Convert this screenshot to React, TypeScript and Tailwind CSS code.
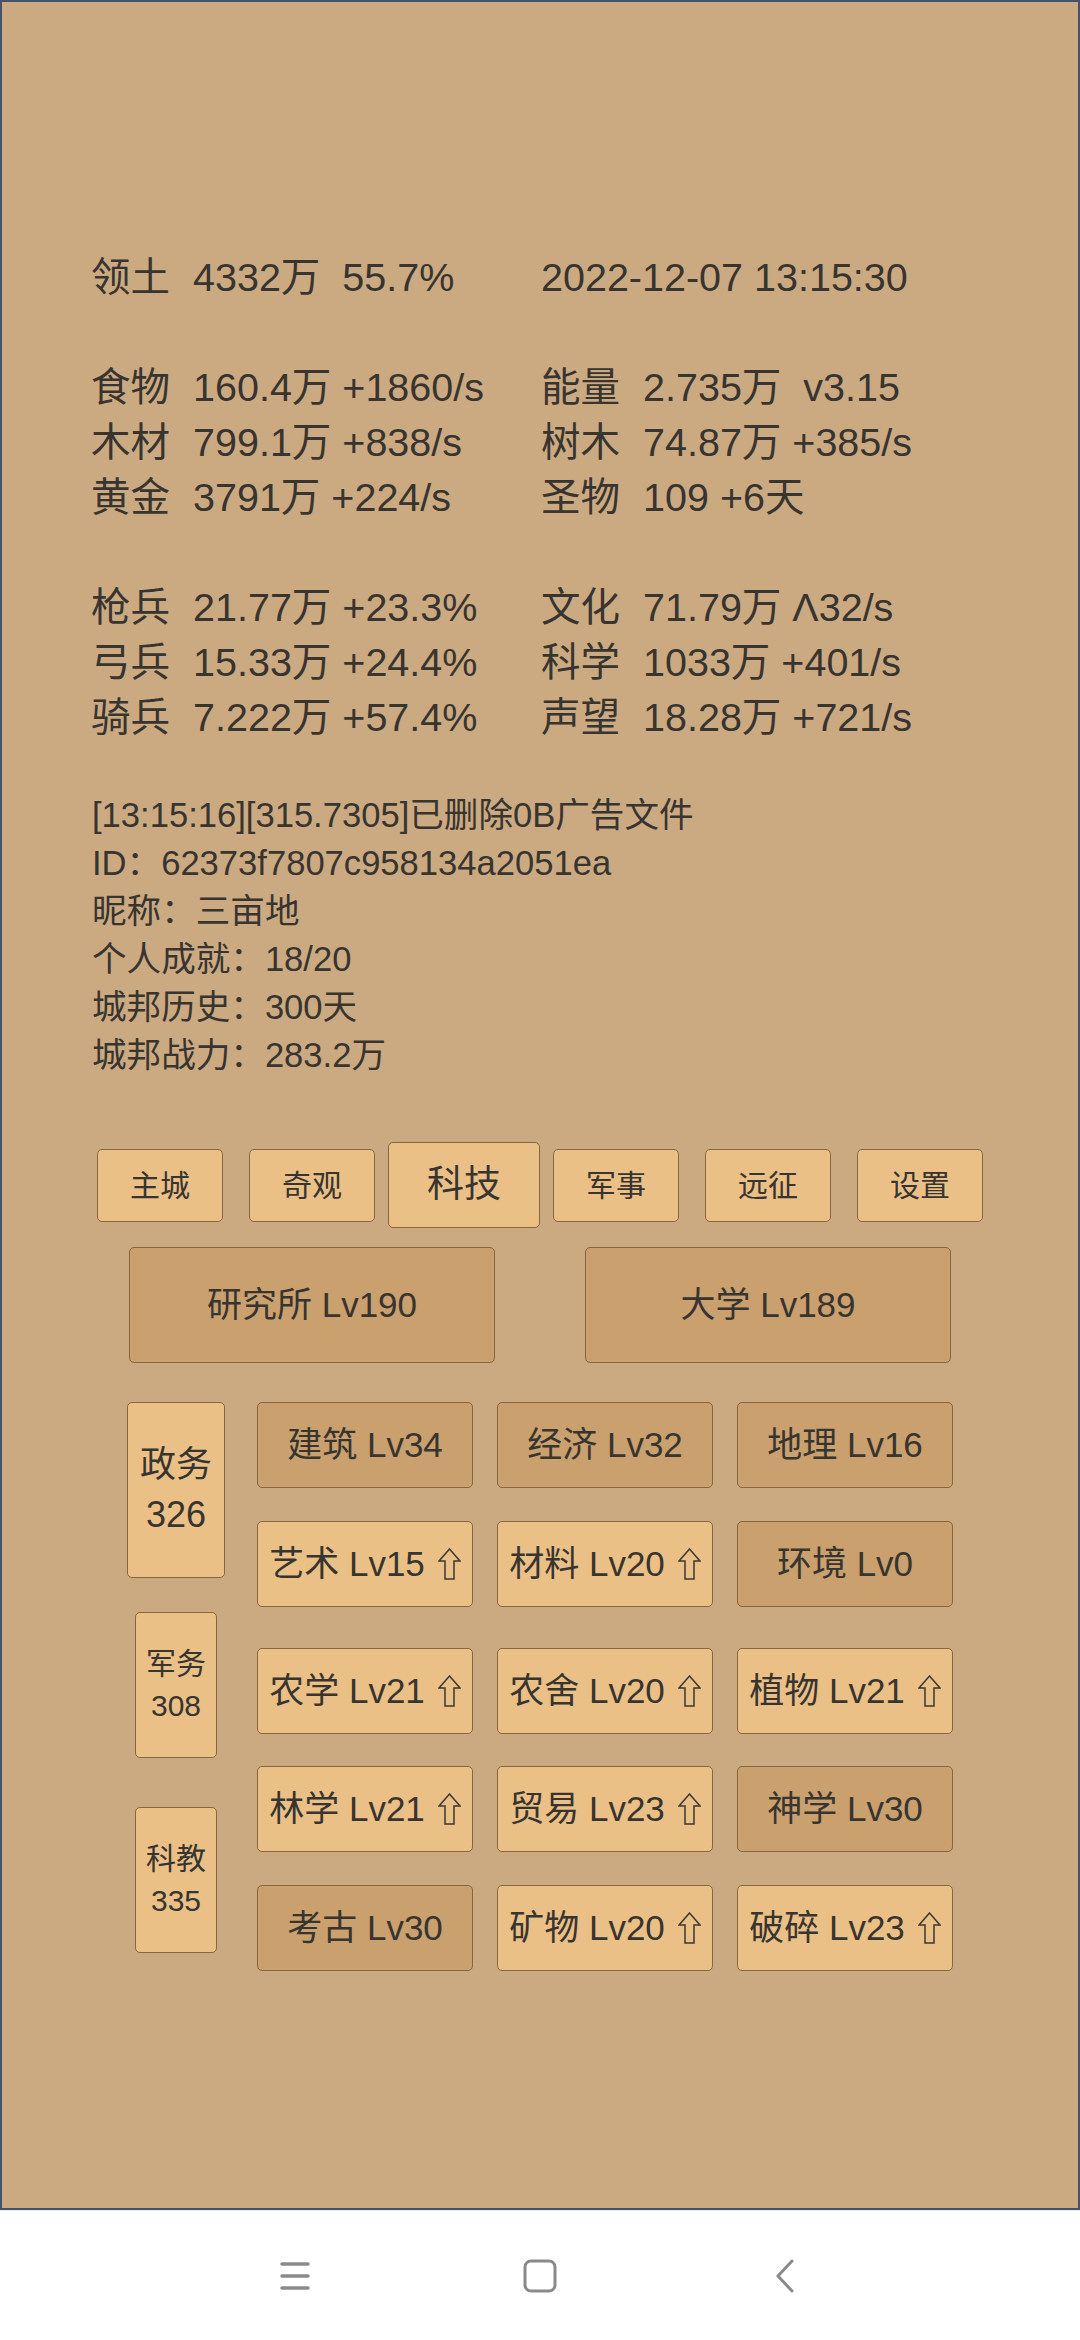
import React from "react";

type Stat = { label: string; value: string };

const statRows: (null | [Stat, Stat])[] = [
  [
    { label: "领土", value: "4332万  55.7%" },
    { label: "", value: "2022-12-07 13:15:30" },
  ],
  null,
  [
    { label: "食物", value: "160.4万 +1860/s" },
    { label: "能量", value: "2.735万  v3.15" },
  ],
  [
    { label: "木材", value: "799.1万 +838/s" },
    { label: "树木", value: "74.87万 +385/s" },
  ],
  [
    { label: "黄金", value: "3791万 +224/s" },
    { label: "圣物", value: "109 +6天" },
  ],
  null,
  [
    { label: "枪兵", value: "21.77万 +23.3%" },
    { label: "文化", value: "71.79万 Λ32/s" },
  ],
  [
    { label: "弓兵", value: "15.33万 +24.4%" },
    { label: "科学", value: "1033万 +401/s" },
  ],
  [
    { label: "骑兵", value: "7.222万 +57.4%" },
    { label: "声望", value: "18.28万 +721/s" },
  ],
];

const infoLines = [
  "[13:15:16][315.7305]已删除0B广告文件",
  "ID：62373f7807c958134a2051ea",
  "昵称：三亩地",
  "个人成就：18/20",
  "城邦历史：300天",
  "城邦战力：283.2万",
];

const tabs = ["主城", "奇观", "科技", "军事", "远征", "设置"];

type Tech = { name: string; lv: number; up: boolean };

// maxed techs are drawn dark, upgradable ones light with an arrow
const techRows: { mt: string; items: Tech[] }[] = [
  {
    mt: "mt-0",
    items: [
      { name: "建筑", lv: 34, up: false },
      { name: "经济", lv: 32, up: false },
      { name: "地理", lv: 16, up: false },
    ],
  },
  {
    mt: "mt-[33px]",
    items: [
      { name: "艺术", lv: 15, up: true },
      { name: "材料", lv: 20, up: true },
      { name: "环境", lv: 0, up: false },
    ],
  },
  {
    mt: "mt-[41px]",
    items: [
      { name: "农学", lv: 21, up: true },
      { name: "农舍", lv: 20, up: true },
      { name: "植物", lv: 21, up: true },
    ],
  },
  {
    mt: "mt-[32px]",
    items: [
      { name: "林学", lv: 21, up: true },
      { name: "贸易", lv: 23, up: true },
      { name: "神学", lv: 30, up: false },
    ],
  },
  {
    mt: "mt-[33px]",
    items: [
      { name: "考古", lv: 30, up: false },
      { name: "矿物", lv: 20, up: true },
      { name: "破碎", lv: 23, up: true },
    ],
  },
];

const light = "bg-[#eac087]";
const dark = "bg-[#c9a06e]";
const edge = "border-[1.5px] border-[#86673f] rounded-[5px]";

const UpArrow = () => (
  <svg width="23" height="32" viewBox="0 0 23 32" className="ml-[13px] shrink-0">
    <path
      d="M11.5 1 L22 13 L16 13 L16 31 L7 31 L7 13 L1 13 Z"
      fill="none"
      stroke="#3b3733"
      strokeWidth="1.5"
    />
  </svg>
);

const NavBar = () => (
  <div className="h-[130px] bg-white border-t border-[#ececec] flex items-center justify-center">
    <div className="w-[245px] flex justify-center">
      <svg width="30" height="30" viewBox="0 0 30 30">
        <g stroke="#8a8a8a" strokeWidth="3.5" strokeLinecap="round">
          <line x1="2" y1="3" x2="28" y2="3" />
          <line x1="2" y1="15" x2="28" y2="15" />
          <line x1="2" y1="27" x2="28" y2="27" />
        </g>
      </svg>
    </div>
    <div className="w-[245px] flex justify-center">
      <svg width="34" height="34" viewBox="0 0 34 34">
        <rect x="2" y="2" width="30" height="30" rx="6" fill="none" stroke="#8a8a8a" strokeWidth="3" />
      </svg>
    </div>
    <div className="w-[245px] flex justify-center">
      <svg width="22" height="34" viewBox="0 0 22 34">
        <path d="M18 2 L4 17 L18 32" fill="none" stroke="#8a8a8a" strokeWidth="3" strokeLinecap="round" strokeLinejoin="round" />
      </svg>
    </div>
  </div>
);

export default function App() {
  return (
    <div className="w-[1080px] font-['Liberation_Sans','Noto_Sans_CJK_SC',sans-serif] text-[#38342f]">
      <div className="h-[2210px] bg-[#cbaa82] border-2 border-[#44526a] flex flex-col">
        {/* resource stats */}
        <div className="pt-[248px] pl-[89px] text-[39.5px] leading-[55px]">
          {statRows.map((row, i) =>
            row === null ? (
              <div key={i} className="h-[55px]" />
            ) : (
              <div key={i} className="flex whitespace-pre">
                {row.map((s, j) => (
                  <div key={j} className={j === 0 ? "w-[450px] flex" : "flex"}>
                    {s.label && <span className="w-[102px]">{s.label}</span>}
                    <span>{s.value}</span>
                  </div>
                ))}
              </div>
            )
          )}
        </div>

        {/* log + profile */}
        <div className="mt-[46px] pl-[90px] text-[34.6px] leading-[48px]">
          {infoLines.map((t) => (
            <div key={t}>{t}</div>
          ))}
        </div>

        {/* tabs */}
        <div className="mt-[63px] mx-auto w-[912px] grid grid-cols-6 h-[86px] items-center">
          {tabs.map((t) => (
            <div key={t} className="flex justify-center">
              {t === "科技" ? (
                <button className={`${light} ${edge} w-[152px] h-[86px] text-[37px]`}>{t}</button>
              ) : (
                <button className={`${light} ${edge} w-[126px] h-[73px] text-[30px]`}>{t}</button>
              )}
            </div>
          ))}
        </div>

        {/* main buildings */}
        <div className="mt-[19px] mx-auto w-[912px] grid grid-cols-2">
          {["研究所 Lv190", "大学 Lv189"].map((t) => (
            <div key={t} className="flex justify-center">
              <button className={`${dark} ${edge} w-[366px] h-[116px] text-[35px]`}>{t}</button>
            </div>
          ))}
        </div>

        {/* tech tree */}
        <div className="mt-[39px] flex justify-center gap-[32px]">
          <div className="w-[98px] flex flex-col items-center">
            <button className={`${light} ${edge} w-[98px] h-[176px] text-[36px] leading-[50px] flex flex-col items-center justify-center`}>
              <span>政务</span>
              <span>326</span>
            </button>
            <button className={`${light} ${edge} mt-[34px] w-[82px] h-[146px] text-[30px] leading-[42px] flex flex-col items-center justify-center`}>
              <span>军务</span>
              <span>308</span>
            </button>
            <button className={`${light} ${edge} mt-[49px] w-[82px] h-[146px] text-[30px] leading-[42px] flex flex-col items-center justify-center`}>
              <span>科教</span>
              <span>335</span>
            </button>
          </div>

          <div className="flex flex-col">
            {techRows.map((r, i) => (
              <div key={i} className={`${r.mt} flex gap-x-[24px]`}>
                {r.items.map((t) => (
                  <button
                    key={t.name}
                    className={`${t.up ? light : dark} ${edge} w-[216px] h-[86px] text-[35px] flex items-center justify-center whitespace-pre`}
                  >
                    <span>{`${t.name} Lv${t.lv}`}</span>
                    {t.up && <UpArrow />}
                  </button>
                ))}
              </div>
            ))}
          </div>
        </div>
      </div>
      <NavBar />
    </div>
  );
}
